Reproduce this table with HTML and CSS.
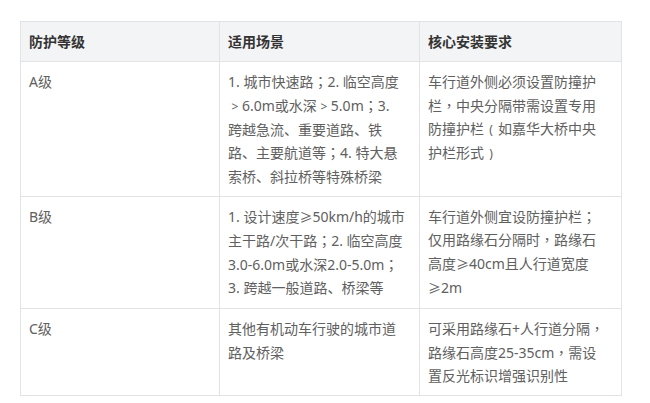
FILE: index.html
```html
<!DOCTYPE html>
<html lang="zh-CN">
<head>
<meta charset="utf-8">
<title>防护等级</title>
<link rel="stylesheet" href="styles.css">
</head>
<body>
<div class="page">
  <table class="grade-table">
    <colgroup>
      <col class="c1">
      <col class="c2">
      <col class="c3">
    </colgroup>
    <thead>
      <tr>
        <th>防护等级</th>
        <th>适用场景</th>
        <th>核心安装要求</th>
      </tr>
    </thead>
    <tbody>
      <tr>
        <td>A级</td>
        <td>1. 城市快速路<span class="pc" lang="zh-TW">；</span>2. 临空高度<br><span class="gt">&gt;</span>6.0m或水深<span class="gt">&gt;</span>5.0m<span class="pc" lang="zh-TW">；</span>3.<br>跨越急流、重要道路、铁<br>路、主要航道等<span class="pc" lang="zh-TW">；</span>4. 特大悬<br>索桥、斜拉桥等特殊桥梁</td>
        <td>车行道外侧必须设置防撞护<br>栏<span class="pc" lang="zh-TW">，</span>中央分隔带需设置专用<br>防撞护栏<span class="gt">(</span>如嘉华大桥中央<br>护栏形式<span class="gt">)</span></td>
      </tr>
      <tr>
        <td>B级</td>
        <td>1. 设计速度<span class="ge">≥</span>50km/h的城市<br>主干路/次干路<span class="pc" lang="zh-TW">；</span>2. 临空高度<br>3.0-6.0m或水深2.0-5.0m<span class="pc" lang="zh-TW">；</span><br>3. 跨越一般道路、桥梁等</td>
        <td>车行道外侧宜设防撞护栏<span class="pc" lang="zh-TW">；</span><br>仅用路缘石分隔时<span class="pc" lang="zh-TW">，</span>路缘石<br>高度<span class="ge">≥</span>40cm且人行道宽度<br><span class="ge">≥</span>2m</td>
      </tr>
      <tr>
        <td>C级</td>
        <td>其他有机动车行驶的城市道<br>路及桥梁</td>
        <td>可采用路缘石+人行道分隔<span class="pc" lang="zh-TW">，</span><br>路缘石高度25-35cm<span class="pc" lang="zh-TW">，</span>需设<br>置反光标识增强识别性</td>
      </tr>
    </tbody>
  </table>
</div>
</body>
</html>
```

FILE: styles.css
```css
html, body {
  margin: 0;
  padding: 0;
  background: #ffffff;
}

.page {
  padding: 21px 20px;
}

.grade-table {
  border-collapse: collapse;
  table-layout: fixed;
  width: 601px;
  font-family: "Noto Sans", "Noto Sans CJK SC", sans-serif;
  font-size: 14px;
  line-height: 23.33px;
  color: #606060;
}

.c1 { width: 199px; }
.c2 { width: 200px; }
.c3 { width: 202px; }

.grade-table th,
.grade-table td {
  border: 1px solid #e2e3e5;
  padding: 8px;
  text-align: left;
  vertical-align: top;
  white-space: nowrap;
}

.grade-table th {
  background: #f3f4f5;
  color: #333333;
  font-weight: 600;
}

.pc {
  font-family: "Noto Sans CJK TC", "Noto Sans CJK SC", sans-serif;
}

.gt {
  display: inline-block;
  width: 14px;
  text-align: center;
  font-size: 12px;
}

.ge {
  font-size: 13px;
}
```
